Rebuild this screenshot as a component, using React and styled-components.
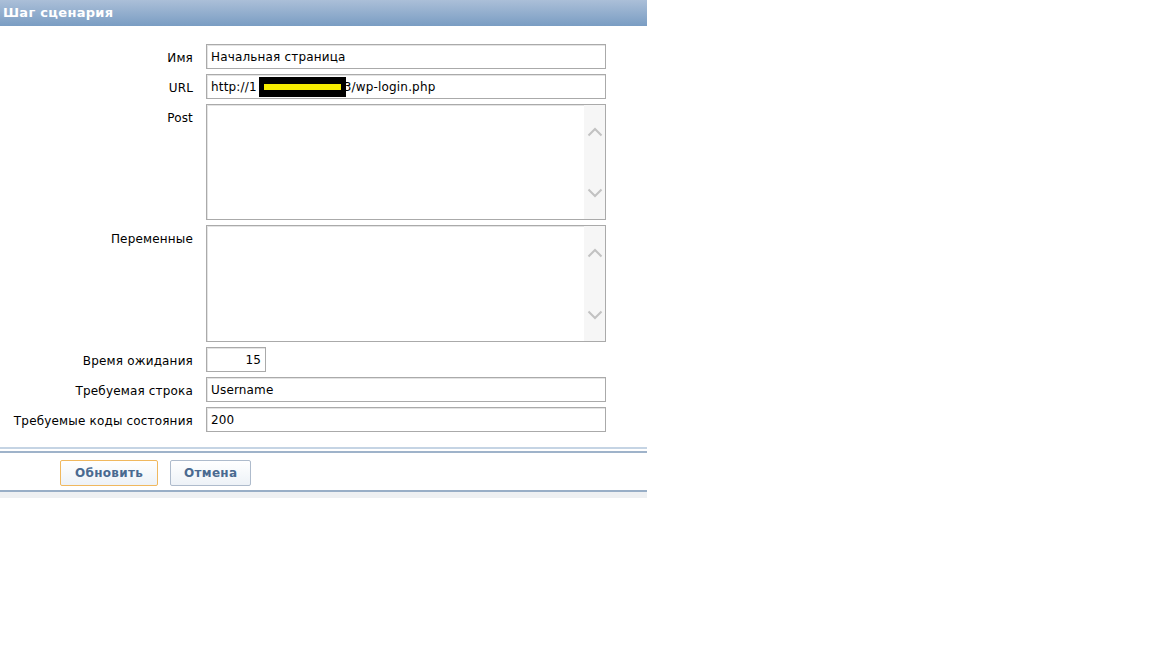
import React from "react";
import styled, { createGlobalStyle } from "styled-components";

const Global = createGlobalStyle`
  html, body { margin: 0; padding: 0; background: #ffffff; }
  body { font-family: "DejaVu Sans", Verdana, sans-serif; font-size: 12px; color: #000; letter-spacing: 0.17px; }
`;

const Page = styled.div`
  width: 647px;
`;

const Header = styled.div`
  height: 26px;
  background: linear-gradient(#abbfd8, #7a9dc3);
  color: #ffffff;
  font-weight: bold;
  font-size: 13px;
  letter-spacing: 0.3px;
  line-height: 25px;
  padding-left: 3px;
`;

const Form = styled.div`
  display: grid;
  grid-template-columns: 193px 400px;
  column-gap: 13px;
  row-gap: 5px;
  padding-top: 18px;
  align-items: start;
`;

const Label = styled.div`
  box-sizing: border-box;
  height: 25px;
  padding-top: 3px;
  line-height: 23px;
  text-align: right;
  white-space: nowrap;
`;

const Input = styled.div`
  box-sizing: border-box;
  height: 25px;
  width: ${(p) => p.$w || "400px"};
  border: 1px solid #aaaaaa;
  box-shadow: inset 1px 1px 0 #e4e4e4;
  padding: 1px 4px 0;
  line-height: 23px;
  text-align: ${(p) => (p.$right ? "right" : "left")};
  white-space: nowrap;
  background: #fff;
`;

const Redact = styled.span`
  display: inline-flex;
  align-items: center;
  justify-content: center;
  vertical-align: middle;
  width: 87px;
  height: 20px;
  margin: 0 -2px 0 2px;
  position: relative;
  top: -1px;
  background: #000;
  & > i {
    display: block;
    width: 77px;
    height: 6px;
    background: #f5ec00;
  }
`;

const AreaBox = styled.div`
  box-sizing: border-box;
  width: 400px;
  height: ${(p) => p.$h}px;
  border: 1px solid #aaaaaa;
  box-shadow: inset 1px 1px 0 #e4e4e4;
  display: flex;
  background: #fff;
`;

const Area = styled.textarea`
  flex: 1;
  border: 0;
  outline: none;
  resize: none;
  background: transparent;
  font: inherit;
`;

const Scroll = styled.div`
  width: 21px;
  background: #f6f6f6;
  display: flex;
  flex-direction: column;
  align-items: center;
  justify-content: space-between;
  padding: 22px 0 21px;
`;

const Chevron = ({ up }) => (
  <svg width="16" height="10" viewBox="0 0 16 10">
    <path
      d={up ? "M1.5 8.5 L8 2 L14.5 8.5" : "M1.5 1.5 L8 8 L14.5 1.5"}
      fill="none"
      stroke="#c2c2c2"
      strokeWidth="2"
    />
  </svg>
);

const TextArea = ({ h }) => (
  <AreaBox $h={h}>
    <Area />
    <Scroll>
      <Chevron up />
      <Chevron />
    </Scroll>
  </AreaBox>
);

const Footer = styled.div`
  margin-top: 15px;
  border-top: 2px solid #c5d4e4;
  padding-top: 2px;
`;

const FooterInner = styled.div`
  border-top: 2px solid #9fb3ca;
  border-bottom: 2px solid #98aec6;
  padding: 7px 0 4px 60px;
  display: flex;
  gap: 12px;
`;

const Strip = styled.div`
  height: 6px;
  background: #eef0f2;
`;

const Button = styled.button`
  box-sizing: border-box;
  height: 26px;
  padding: 0 ${(p) => (p.$primary ? 14 : 13)}px;
  border: 1px solid ${(p) => (p.$primary ? "#f0b85e" : "#aebbcc")};
  border-radius: 2px;
  background: linear-gradient(#ffffff, #edf2f7);
  color: #4a6a90;
  font-family: "DejaVu Sans", Verdana, sans-serif;
  font-weight: bold;
  font-size: 12px;
  letter-spacing: 0.3px;
  cursor: pointer;
`;

export default function App() {
  return (
    <Page>
      <Global />
      <Header>Шаг сценария</Header>
      <Form>
        <Label>Имя</Label>
        <Input>Начальная страница</Input>
        <Label>URL</Label>
        <Input>
          http://1<Redact><i /></Redact>3/wp-login.php
        </Input>
        <Label>Post</Label>
        <TextArea h={116} />
        <Label>Переменные</Label>
        <TextArea h={117} />
        <Label>Время ожидания</Label>
        <Input $w="60px" $right>15</Input>
        <Label>Требуемая строка</Label>
        <Input>Username</Input>
        <Label>Требуемые коды состояния</Label>
        <Input>200</Input>
      </Form>
      <Footer>
        <FooterInner>
          <Button $primary>Обновить</Button>
          <Button>Отмена</Button>
        </FooterInner>
        <Strip />
      </Footer>
    </Page>
  );
}
